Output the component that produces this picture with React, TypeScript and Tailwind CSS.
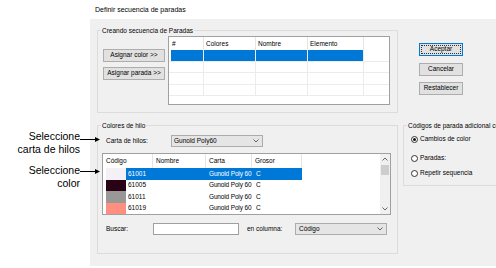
import React from "react";

function Chev({ up }: { up?: boolean }) {
  return (
    <svg width="6" height="4" viewBox="0 0 6 4" className="block">
      <polyline
        points={up ? "0.5,3.5 3,1 5.5,3.5" : "0.5,0.5 3,3 5.5,0.5"}
        fill="none"
        stroke="#555"
        strokeWidth="0.9"
      />
    </svg>
  );
}

function Btn({ children }: { children: React.ReactNode }) {
  return (
    <div className="flex h-[13px] w-full items-center justify-center border border-[#adadad] bg-[#e1e1e1] leading-none whitespace-nowrap">
      {children}
    </div>
  );
}

function Radio({ checked, label }: { checked?: boolean; label: string }) {
  return (
    <div className="flex h-[9px] items-center gap-[2px] whitespace-nowrap">
      <div className="flex h-[7px] w-[7px] items-center justify-center rounded-full border border-[#333] bg-white">
        {checked && <div className="h-[3px] w-[3px] rounded-full bg-[#111]" />}
      </div>
      <span className="leading-none">{label}</span>
    </div>
  );
}

const rows1 = [true, false, false, false];

const rows2 = [
  { sw: "#f3f1f6", code: "61001", sel: true },
  { sw: "#2a0216", code: "61005", sel: false },
  { sw: "#9a9896", code: "61011", sel: false },
  { sw: "#ff8f80", code: "61019", sel: false },
];

export default function App() {
  return (
    <div className="relative h-[268px] w-[496px] overflow-hidden bg-white font-['Liberation_Sans',Arial,sans-serif] text-[6.5px] text-black">
      {/* title */}
      <div className="h-[19px] pl-[95px] pt-[6px] text-[7px] leading-[8px]">
        Definir secuencia de paradas
      </div>

      {/* dialog panel */}
      <div className="ml-[90px] flex h-[247px] w-[406px] overflow-hidden bg-[#f0f0f0]">
        {/* left column */}
        <div className="flex shrink-0 flex-col pl-[7px]">
          {/* group 1 */}
          <div className="relative mt-[11px] flex h-[83px] w-[301px] border border-[#dcdcdc] pl-[5px] pt-[5px]">
            <span className="absolute left-[3px] top-[-5px] bg-[#f0f0f0] px-[1px] leading-[9px] whitespace-nowrap">
              Creando secuencia de Paradas
            </span>
            <div className="mt-[13px] flex w-[62px] shrink-0 flex-col gap-[5px]">
              <Btn>Asignar color &gt;&gt;</Btn>
              <Btn>Asignar parada &gt;&gt;</Btn>
            </div>
            <div className="ml-[3px] h-[69px] w-[222px] shrink-0 overflow-hidden border border-[#a0a0a0] bg-white">
              <div className="flex h-[13px] items-center">
                <div className="flex h-full w-[35px] items-center border-r border-[#e5e5e5] pl-[3px]">#</div>
                <div className="flex h-full w-[52px] items-center border-r border-[#e5e5e5] pl-[2px]">Colores</div>
                <div className="flex h-full w-[52px] items-center border-r border-[#e5e5e5] pl-[2px]">Nombre</div>
                <div className="flex h-full w-[56px] items-center border-r border-[#e5e5e5] pl-[2px]">Elemento</div>
              </div>
              {rows1.map((sel, i) => (
                <div key={i} className="flex h-[11.5px] border-b border-[#ececec] pl-[2px]">
                  <div className={`h-full w-[33px] border-r border-[#ececec] ${sel ? "bg-[#0078d7]" : ""}`} />
                  <div className={`h-full w-[52px] border-r border-[#ececec] ${sel ? "bg-[#0078d7]" : ""}`} />
                  <div className={`h-full w-[52px] border-r border-[#ececec] ${sel ? "bg-[#0078d7]" : ""}`} />
                  <div className={`h-full w-[56px] border-r border-[#ececec] ${sel ? "bg-[#0078d7]" : ""}`} />
                </div>
              ))}
            </div>
          </div>

          {/* group 2 */}
          <div className="relative mt-[12px] flex h-[129px] w-[301px] flex-col border border-[#dcdcdc] pl-[4px] pt-[9px]">
            <span className="absolute left-[3px] top-[-5px] bg-[#f0f0f0] px-[1px] leading-[9px] whitespace-nowrap">
              Colores de hilo
            </span>
            <div className="flex items-center pl-[4px]">
              <span className="w-[65px] leading-none">Carta de hilos:</span>
              <div className="flex h-[12px] w-[92px] items-center justify-between border border-[#acacac] bg-[#e5e5e5] pl-[2px] pr-[3px]">
                <span className="leading-none">Gunold Poly60</span>
                <Chev />
              </div>
            </div>

            <div className="mt-[6px] flex h-[62px] w-[289px] overflow-hidden border border-[#a0a0a0] bg-white">
              <div className="flex-1 overflow-hidden">
                <div className="flex h-[14px] items-center">
                  <div className="flex h-full w-[50px] items-center border-r border-[#e5e5e5] pl-[3px]">Código</div>
                  <div className="flex h-full w-[53px] items-center border-r border-[#e5e5e5] pl-[3px]">Nombre</div>
                  <div className="flex h-full w-[46px] items-center border-r border-[#e5e5e5] pl-[3px]">Carta</div>
                  <div className="flex h-full w-[50px] items-center border-r border-[#e5e5e5] pl-[3px]">Grosor</div>
                </div>
                {rows2.map((r) => {
                  const c = r.sel ? "bg-[#0078d7] text-white" : "";
                  return (
                    <div key={r.code} className="flex h-[11.5px]">
                      <div className="flex h-full w-[50px]">
                        <div className="ml-[3px] h-full w-[20px]" style={{ background: r.sw }} />
                        <div className={`flex h-full flex-1 items-center pl-[2px] ${c}`}>{r.code}</div>
                      </div>
                      <div className={`h-full w-[53px] ${c}`} />
                      <div className={`flex h-full w-[46px] items-center whitespace-nowrap pl-[3px] tracking-[-0.15px] ${c}`}>
                        Gunold Poly 60
                      </div>
                      <div className={`flex h-full w-[50px] items-center pl-[4px] ${c}`}>C</div>
                    </div>
                  );
                })}
              </div>
              <div className="flex w-[10px] shrink-0 flex-col items-center bg-[#f0f0f0]">
                <div className="flex h-[10px] items-center justify-center">
                  <Chev up />
                </div>
                <div className="mt-[1px] h-[10px] w-[8px] bg-[#cdcdcd]" />
                <div className="flex-1" />
                <div className="flex h-[10px] items-center justify-center">
                  <Chev />
                </div>
              </div>
            </div>

            <div className="mt-[8px] flex items-center pl-[4px]">
              <span className="w-[47px] leading-none">Buscar:</span>
              <div className="h-[12px] w-[86px] border border-[#a0a0a0] bg-white" />
              <span className="ml-[8px] w-[48px] leading-none">en columna:</span>
              <div className="flex h-[12px] w-[92px] items-center justify-between border border-[#acacac] bg-[#e5e5e5] pl-[3px] pr-[3px]">
                <span className="leading-none">Código</span>
                <Chev />
              </div>
            </div>
          </div>
        </div>

        {/* right column */}
        <div className="ml-[5px] flex shrink-0 flex-col">
          <div className="mt-[24px] ml-[16px] flex w-[44px] flex-col gap-[6.5px]">
            <div className="h-[13px] w-[44px] border border-[#0078d7] bg-[#e1e1e1] p-[1px]">
              <div className="flex h-full items-center justify-center border border-dotted border-[#333] leading-none">
                Aceptar
              </div>
            </div>
            <Btn>Cancelar</Btn>
            <Btn>Restablecer</Btn>
          </div>

          <div className="relative mt-[30px] flex h-[61px] w-[120px] flex-col border border-[#dcdcdc] pl-[7px] pt-[9px]">
            <span className="absolute left-[3px] top-[-5px] bg-[#f0f0f0] px-[1px] leading-[9px] whitespace-nowrap">
              Códigos de parada adicional co
            </span>
            <Radio checked label="Cambios de color" />
            <div className="mt-[9.5px]">
              <Radio label="Paradas:" />
            </div>
            <div className="mt-[6px]">
              <Radio label="Repetir sequencia" />
            </div>
          </div>
        </div>
      </div>

      {/* callouts */}
      <div className="absolute left-0 top-[130px] w-[80px] text-right text-[10.5px] leading-[13px]">
        Seleccione
        <br />
        carta de hilos
      </div>
      <svg className="absolute left-[80px] top-[136px]" width="21" height="7" viewBox="0 0 21 7">
        <line x1="0" y1="3.5" x2="17" y2="3.5" stroke="#000" strokeWidth="1" />
        <polygon points="15,1 20,3.5 15,6" fill="#000" />
      </svg>

      <div className="absolute left-0 top-[164px] w-[80px] text-right text-[10.5px] leading-[13px]">
        Seleccione
        <br />
        color
      </div>
      <svg className="absolute left-[80px] top-[168px]" width="21" height="7" viewBox="0 0 21 7">
        <line x1="0" y1="3.5" x2="17" y2="3.5" stroke="#000" strokeWidth="1" />
        <polygon points="15,1 20,3.5 15,6" fill="#000" />
      </svg>
    </div>
  );
}
